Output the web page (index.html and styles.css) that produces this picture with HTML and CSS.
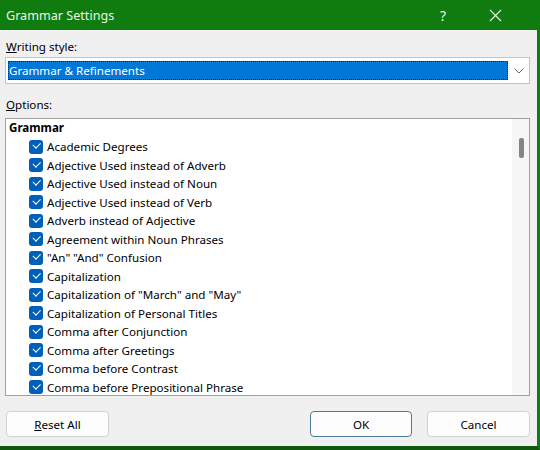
FILE: index.html
```html
<!DOCTYPE html>
<html>
<head>
<meta charset="utf-8">
<link rel="stylesheet" href="styles.css">
</head>
<body>
<div class="dialog">
  <div class="titlebar">
    <span class="title">Grammar Settings</span>
    <span class="help">?</span>
    <svg class="close" width="13" height="13" viewBox="0 0 13 13"><path d="M1 1 L12 12 M12 1 L1 12" stroke="#e8f4e8" stroke-width="1.1" fill="none"/></svg>
  </div>
  <div class="content">
    <div class="label first"><u>W</u>riting style:</div>
    <div class="select">
      <div class="selected">Grammar &amp; Refinements</div>
      <div class="arrow"><svg width="12" height="8" viewBox="0 0 12 8"><path d="M1.5 1.5 L6 6 L10.5 1.5" stroke="#666" stroke-width="1" fill="none"/></svg></div>
    </div>
    <div class="label second"><u>O</u>ptions:</div>
    <div class="list">
      <div class="items">
        <div class="group">Grammar</div>
        <div class="item"><span class="cb"></span>Academic Degrees</div>
        <div class="item"><span class="cb"></span>Adjective Used instead of Adverb</div>
        <div class="item"><span class="cb"></span>Adjective Used instead of Noun</div>
        <div class="item"><span class="cb"></span>Adjective Used instead of Verb</div>
        <div class="item"><span class="cb"></span>Adverb instead of Adjective</div>
        <div class="item"><span class="cb"></span>Agreement within Noun Phrases</div>
        <div class="item"><span class="cb"></span>"An" "And" Confusion</div>
        <div class="item"><span class="cb"></span>Capitalization</div>
        <div class="item"><span class="cb"></span>Capitalization of "March" and "May"</div>
        <div class="item"><span class="cb"></span>Capitalization of Personal Titles</div>
        <div class="item"><span class="cb"></span>Comma after Conjunction</div>
        <div class="item"><span class="cb"></span>Comma after Greetings</div>
        <div class="item"><span class="cb"></span>Comma before Contrast</div>
        <div class="item"><span class="cb"></span>Comma before Prepositional Phrase</div>
      </div>
      <div class="scrollbar"><div class="thumb"></div></div>
    </div>
    <div class="buttons">
      <button class="btn"><u>R</u>eset All</button>
      <span class="spacer"></span>
      <button class="btn default">OK</button>
      <button class="btn">Cancel</button>
    </div>
  </div>
</div>
</body>
</html>
```
FILE: styles.css
```css
html, body {
  margin: 0;
  padding: 0;
  background: #1e5a1e;
}
.dialog {
  width: 537px;
  height: 446px;
  background: #f0f0f0;
  border-right: 3px solid #107c10;
  border-bottom: 4px solid #0d5a0d;
  font-family: "Noto Sans", "Open Sans", sans-serif;
  font-size: 11.6px;
  color: #000;
  overflow: hidden;
  display: flex;
  flex-direction: column;
}
.titlebar {
  height: 30px;
  background: #107c10;
  display: flex;
  align-items: center;
  padding-left: 6px;
  color: #e8f4e8;
  flex-shrink: 0;
}
.title {
  font-size: 12.6px;
  flex: 1;
}
.help {
  font-size: 14px;
  margin-right: 43px;
}
.close {
  margin-right: 35px;
}
.content {
  padding: 0 7px 0 5px;
  display: flex;
  flex-direction: column;
}
.label {
  height: 16px;
  line-height: 16px;
  padding-left: 1px;
}
.label.first { margin-top: 9px; }
.label.second { margin-top: 13px; }
.select {
  margin-top: 2px;
  height: 25px;
  border: 1px solid #c4c4c4;
  background: #fff;
  display: flex;
  align-items: center;
  padding-left: 2px;
}
.selected {
  flex: 1;
  height: 19px;
  line-height: 19px;
  background: #0078d7;
  color: #fff;
  padding-left: 1px;
  outline: 1px dotted #0a2a4a;
  outline-offset: -1px;
}
.arrow {
  width: 20px;
  height: 25px;
  display: flex;
  align-items: center;
  justify-content: center;
  margin-left: 1px;
}
.list {
  margin-top: 5px;
  height: 276px;
  border: 1px solid #a0a0a0;
  background: #fff;
  display: flex;
  overflow: hidden;
}
.items {
  flex: 1;
  overflow: hidden;
}
.group {
  height: 18.5px;
  line-height: 18.5px;
  font-weight: bold;
  padding-left: 3px;
}
.item {
  height: 18.5px;
  display: flex;
  align-items: center;
  padding-left: 23px;
}
.item:first-of-type { margin-top: 0.5px; }
.cb {
  width: 14px;
  height: 14px;
  border-radius: 3px;
  background: #005fb8;
  margin-right: 4px;
  flex-shrink: 0;
  position: relative;
}
.cb::after {
  content: "";
  position: absolute;
  left: 3.5px;
  top: 2.5px;
  width: 6px;
  height: 3.5px;
  border-left: 1.3px solid #fff;
  border-bottom: 1.3px solid #fff;
  transform: rotate(-45deg);
  transform-origin: center;
}
.scrollbar {
  width: 17px;
  background: #f6f6f6;
  padding-top: 19px;
  display: flex;
  justify-content: center;
}
.thumb {
  width: 5px;
  height: 20px;
  border-radius: 2px;
  background: #858585;
  margin-left: 2px;
}
.buttons {
  margin-top: 15px;
  display: flex;
  gap: 15px;
  padding-left: 1px;
}
.spacer { flex: 1; }
.btn {
  width: 103px;
  height: 26px;
  border: 1px solid #d2d2d2;
  border-radius: 4px;
  background: #fdfdfd;
  font-family: "Noto Sans", "Open Sans", sans-serif;
  font-size: 11.6px;
  color: #000;
  padding: 0;
}
.btn.default {
  border: 1px solid #4a7e98;
  width: 102px;
}
```
